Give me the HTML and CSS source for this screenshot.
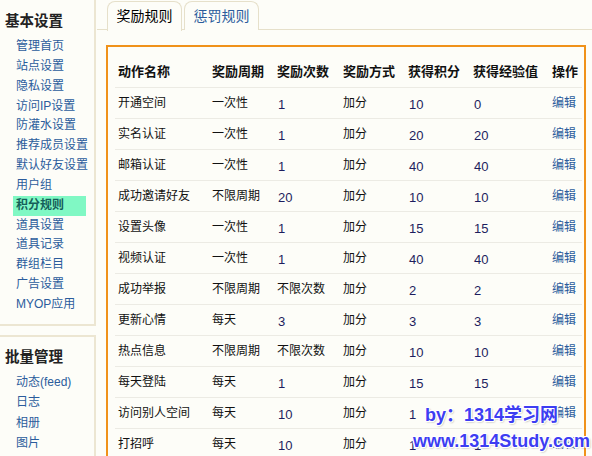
FILE: index.html
```html
<!DOCTYPE html>
<html>
<head>
<meta charset="utf-8">
<link rel="stylesheet" href="styles.css">
</head>
<body>
<div class="page">
  <aside class="side">
    <div class="side-box box1">
      <h2 class="side-title">基本设置</h2>
      <ul class="side-list">
        <li><a href="#">管理首页</a></li>
        <li><a href="#">站点设置</a></li>
        <li><a href="#">隐私设置</a></li>
        <li><a href="#">访问IP设置</a></li>
        <li><a href="#">防灌水设置</a></li>
        <li><a href="#">推荐成员设置</a></li>
        <li><a href="#">默认好友设置</a></li>
        <li><a href="#">用户组</a></li>
        <li><a href="#" class="active">积分规则</a></li>
        <li><a href="#">道具设置</a></li>
        <li><a href="#">道具记录</a></li>
        <li><a href="#">群组栏目</a></li>
        <li><a href="#">广告设置</a></li>
        <li><a href="#">MYOP应用</a></li>
      </ul>
    </div>
    <div class="side-box box2">
      <h2 class="side-title">批量管理</h2>
      <ul class="side-list list2">
        <li><a href="#">动态(feed)</a></li>
        <li><a href="#">日志</a></li>
        <li><a href="#">相册</a></li>
        <li><a href="#">图片</a></li>
      </ul>
    </div>
  </aside>
  <main class="main">
    <div class="tabs">
      <a href="#" class="tab tab-active">奖励规则</a>
      <a href="#" class="tab">惩罚规则</a>
    </div>
    <div class="panel">
      <table class="rules">
        <colgroup>
          <col class="c1"><col class="c2"><col class="c3"><col class="c4"><col class="c5"><col class="c6"><col class="c7">
        </colgroup>
        <thead>
          <tr><th>动作名称</th><th>奖励周期</th><th>奖励次数</th><th>奖励方式</th><th>获得积分</th><th>获得经验值</th><th>操作</th></tr>
        </thead>
        <tbody>
          <tr><td>开通空间</td><td>一次性</td><td class="n">1</td><td>加分</td><td class="n">10</td><td class="n">0</td><td><a href="#">编辑</a></td></tr>
          <tr><td>实名认证</td><td>一次性</td><td class="n">1</td><td>加分</td><td class="n">20</td><td class="n">20</td><td><a href="#">编辑</a></td></tr>
          <tr><td>邮箱认证</td><td>一次性</td><td class="n">1</td><td>加分</td><td class="n">40</td><td class="n">40</td><td><a href="#">编辑</a></td></tr>
          <tr><td>成功邀请好友</td><td>不限周期</td><td class="n">20</td><td>加分</td><td class="n">10</td><td class="n">10</td><td><a href="#">编辑</a></td></tr>
          <tr><td>设置头像</td><td>一次性</td><td class="n">1</td><td>加分</td><td class="n">15</td><td class="n">15</td><td><a href="#">编辑</a></td></tr>
          <tr><td>视频认证</td><td>一次性</td><td class="n">1</td><td>加分</td><td class="n">40</td><td class="n">40</td><td><a href="#">编辑</a></td></tr>
          <tr><td>成功举报</td><td>不限周期</td><td>不限次数</td><td>加分</td><td class="n">2</td><td class="n">2</td><td><a href="#">编辑</a></td></tr>
          <tr><td>更新心情</td><td>每天</td><td class="n">3</td><td>加分</td><td class="n">3</td><td class="n">3</td><td><a href="#">编辑</a></td></tr>
          <tr><td>热点信息</td><td>不限周期</td><td>不限次数</td><td>加分</td><td class="n">10</td><td class="n">10</td><td><a href="#">编辑</a></td></tr>
          <tr><td>每天登陆</td><td>每天</td><td class="n">1</td><td>加分</td><td class="n">15</td><td class="n">15</td><td><a href="#">编辑</a></td></tr>
          <tr><td>访问别人空间</td><td>每天</td><td class="n">10</td><td>加分</td><td class="n">1</td><td class="n">1</td><td><a href="#">编辑</a></td></tr>
          <tr><td>打招呼</td><td>每天</td><td class="n">10</td><td>加分</td><td class="n">1</td><td class="n">1</td><td><a href="#">编辑</a></td></tr>
        </tbody>
      </table>
    </div>
  </main>
</div>
<div class="watermark">
  <div class="wm1">by：1314学习网</div>
  <div class="wm2">www.1314Study.com</div>
</div>
</body>
</html>
```

FILE: styles.css
```css
html, body {
  margin: 0;
  padding: 0;
  background: #fdfdf8;
  height: 456px;
  overflow: hidden;
}
body {
  font-family: "Liberation Sans", "Noto Sans CJK SC", sans-serif;
  font-size: 12px;
  color: #000;
}
a { color: #2b5c9c; text-decoration: none; }
.page {
  display: flex;
  align-items: flex-start;
}
.side {
  width: 96px;
  flex: none;
}
.side-box {
  border-right: 2px solid #ece6d2;
  box-sizing: border-box;
}
.box1 {
  height: 326px;
  border-bottom: 2px solid #ece6d2;
  padding-top: 11px;
}
.box2 {
  margin-top: 9px;
  border-top: 2px solid #ece6d2;
  padding-top: 10px;
  height: 200px;
}
.side-title {
  margin: 0 0 0 5px;
  font-size: 14.5px;
  line-height: 20px;
  font-weight: bold;
  color: #222;
}
.side-list {
  list-style: none;
  margin: 6px 0 0 0;
  padding: 0 0 0 13px;
}
.side-list li a {
  display: block;
  width: 73px;
  box-sizing: border-box;
  padding-left: 3px;
  line-height: 19.85px;
  height: 19.85px;
  font-size: 12px;
  white-space: nowrap;
}
.side-list a.active {
  background: #80f8c4;
  color: #155f5a;
  font-weight: bold;
}
.list2 { margin-top: 5px; }
.list2 li a { line-height: 20.3px; height: 20.3px; }

.main {
  flex: 1;
  min-width: 0;
}
.tabs {
  display: flex;
  gap: 2px;
  padding: 1px 0 0 10px;
  margin-left: 1px;
  border-bottom: 1px solid #e6e0ca;
  height: 28px;
}
.tab {
  width: 75px;
  box-sizing: border-box;
  height: 29px;
  border: 1px solid #e6e0ca;
  border-bottom: none;
  border-radius: 8px 8px 0 0;
  text-align: center;
  font-size: 14px;
  line-height: 28px;
  color: #2b5c9c;
  background: #fdfdf8;
}
.tab-active {
  color: #000;
  height: 30px;
  position: relative;
  z-index: 1;
}
.panel {
  margin: 15px 6px 0 10px;
  border: 2px solid #f0921a;
  border-bottom: none;
  padding: 10px 2px 0 7px;
  height: 500px;
}
.rules {
  border-collapse: collapse;
  table-layout: fixed;
  width: 467px;
}
.c1 { width: 94px; }
.c2 { width: 65px; }
.c3 { width: 66px; }
.c4 { width: 65px; }
.c5 { width: 65px; }
.c6 { width: 79px; }
.c7 { width: 33px; }
.rules th, .rules td {
  text-align: left;
  padding: 0 0 0 3px;
  height: 30px;
  line-height: 16px;
  border-bottom: 1px solid #ecebe4;
  white-space: nowrap;
  vertical-align: middle;
}
.rules th {
  font-size: 13px;
  font-weight: bold;
  color: #111;
}
.rules td { font-size: 12px; color: #111; }
.rules td.n {
  color: #1d1d5e;
  font-size: 13px;
  height: 27px;
  padding-top: 3px;
  padding-left: 4px;
}
.watermark {
  position: absolute;
  right: 2px;
  top: 402px;
  text-align: right;
  font-family: "Liberation Sans", "Noto Sans CJK SC", sans-serif;
  font-weight: bold;
  font-size: 18px;
  color: #3d3df2;
  line-height: 26px;
  text-shadow: 1px 1px 0 #fff, -1px -1px 0 #fff, 1px -1px 0 #fff, -1px 1px 0 #fff, 0 1px 0 #fff, 1px 0 0 #fff, -1px 0 0 #fff, 0 -1px 0 #fff, 1px 1px 2px #888;
}
.wm1 { margin-right: 32px; }
```
